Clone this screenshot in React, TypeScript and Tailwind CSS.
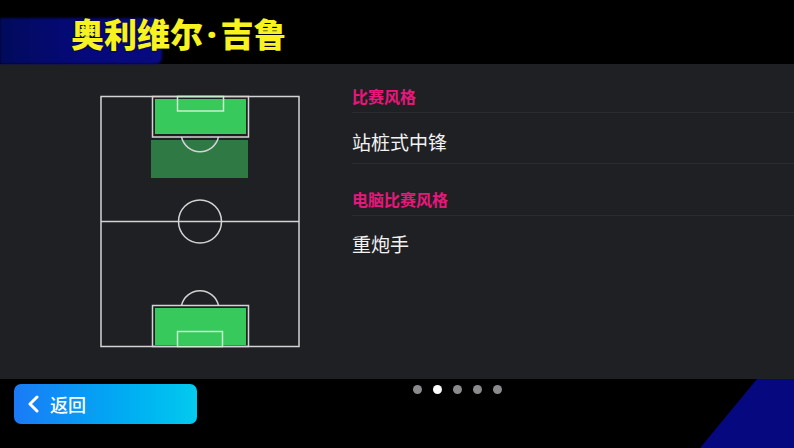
const font = { fontFamily: '"Noto Sans CJK SC", "Noto Sans", sans-serif' };

const Pitch = () => (
  <svg width="202" height="255" viewBox="0 0 202 255" className="block">
    {/* top attack zone */}
    <rect x="52" y="45" width="97" height="38" fill="#2f7a44" />
    <rect x="56" y="4" width="91" height="35" fill="#37c95c" />
    <rect x="56" y="213" width="91" height="37" fill="#37c95c" />
    <g fill="none" stroke="#d4d4d4" strokeWidth="1.5">
      <rect x="2" y="1.5" width="198" height="250" />
      <line x1="2" y1="126.5" x2="200" y2="126.5" />
      <circle cx="101" cy="126.5" r="21.5" />
      {/* top box */}
      <rect x="53.5" y="1.5" width="96" height="40.5" />
      <path d="M 82.5 42 A 19 19 0 0 0 119.5 42" />
      {/* bottom box */}
      <rect x="53.5" y="210.5" width="96" height="41" />
      <path d="M 82.5 210.5 A 19 19 0 0 1 119.5 210.5" />
    </g>
    <g fill="none" stroke="#c8f0cf" strokeWidth="1.5">
      <rect x="78.5" y="1.5" width="46" height="14.5" />
      <rect x="78.5" y="236.5" width="45" height="15" />
    </g>
  </svg>
);

const Dots = ({ active }: { active: number }) => (
  <div className="flex gap-[11px]">
    {[0, 1, 2, 3, 4].map((i) => (
      <span
        key={i}
        className={`h-[9px] w-[9px] rounded-full ${i === active ? "bg-white" : "bg-[#8b8b8d]"}`}
      />
    ))}
  </div>
);

export default function App() {
  return (
    <div className="relative flex h-[448px] w-[794px] flex-col overflow-hidden bg-black" style={font}>
      {/* header */}
      <div className="relative h-[64px] shrink-0">
        <div className="absolute left-0 top-[18px] h-[46px] w-[162px] rounded-r-[6px] bg-gradient-to-r from-[#020a5c] via-[#06097a] to-[#080a80] blur-[1px]" />
        <h1
          className="relative pl-[71px] pt-[13px] text-[33px] font-black leading-[40px] text-[#f6f321]"
          style={{ fontFamily: '"Noto Sans", "Noto Sans CJK SC", sans-serif', textShadow: "0 0 2px #000" }}
        >
          <span style={{ fontFamily: '"Noto Sans CJK SC", sans-serif' }}>奥利维尔</span>
          <span className="px-[4px]">·</span>
          <span style={{ fontFamily: '"Noto Sans CJK SC", sans-serif' }}>吉鲁</span>
        </h1>
      </div>

      {/* panel */}
      <div className="flex h-[315px] shrink-0 bg-[#1f2023]">
        <div className="pl-[99px] pt-[31px]">
          <Pitch />
        </div>
        <div className="ml-[51px] flex flex-1 flex-col">
          <div className="flex h-[49px] items-end border-b border-[#2b2c30] pb-[8px] text-[16px] font-bold leading-[16px] text-[#e8177c]">
            比赛风格
          </div>
          <div className="flex h-[51px] items-center border-b border-[#2b2c30] pt-[7px] text-[19px] leading-[22px] text-[#f2f2f2]">
            站桩式中锋
          </div>
          <div className="flex h-[52px] items-end border-b border-[#2b2c30] pb-[8px] text-[16px] font-bold leading-[16px] text-[#e8177c]">
            电脑比赛风格
          </div>
          <div className="flex h-[56px] items-center text-[19px] leading-[22px] text-[#f2f2f2]">
            重炮手
          </div>
        </div>
      </div>

      {/* footer */}
      <div className="relative flex-1">
        <div
          className="absolute inset-0 bg-[#060880]"
          style={{ clipPath: "polygon(757px 0, 794px 0, 794px 69px, 700px 69px)" }}
        />
        <div className="relative flex items-start">
          <button
            type="button"
            className="ml-[14px] mt-[5px] flex h-[40px] w-[183px] items-center gap-[10px] rounded-[7px] bg-gradient-to-r from-[#1a7af6] to-[#05caee] pl-[12px] text-white"
          >
            <svg width="14" height="18" viewBox="0 0 14 18" fill="none">
              <path d="M11 2 L4 9 L11 16" stroke="white" strokeWidth="3" strokeLinecap="round" strokeLinejoin="round" />
            </svg>
            <span className="text-[18px] font-medium leading-[20px]">返回</span>
          </button>
          <div className="ml-[216px] mt-[6px]">
            <Dots active={1} />
          </div>
        </div>
      </div>
    </div>
  );
}
